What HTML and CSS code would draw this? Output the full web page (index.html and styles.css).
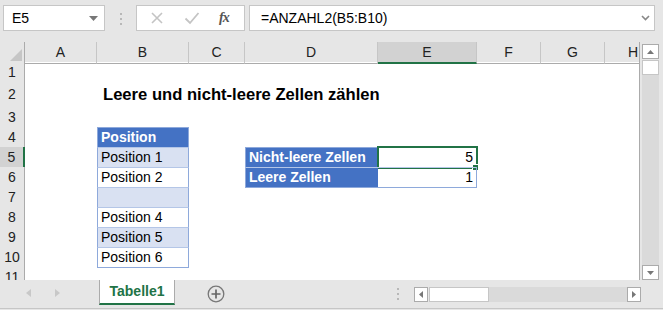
FILE: index.html
```html
<!DOCTYPE html>
<html lang="de">
<head>
    <meta charset="UTF-8">
    <title>Tabelle1</title>
    <link rel="stylesheet" href="styles.css">
</head>
<body>
    <div class="toolbar">
        <div class="namebox">
            <span>E5</span>
            <svg width="9" height="5" viewBox="0 0 9 5"><path d="M0 0h9L4.5 5z" fill="#777"/></svg>
        </div>
        <div class="grip"><i></i><i></i><i></i></div>
        <div class="fbtns">
            <svg width="14" height="14" viewBox="0 0 14 14"><path d="M2 2l10 10M12 2L2 12" stroke="#c4c4c4" stroke-width="1.6"/></svg>
            <svg width="16" height="14" viewBox="0 0 16 14"><path d="M1.5 7.5l4.5 4.5L14.5 2" stroke="#c4c4c4" stroke-width="1.8" fill="none"/></svg>
            <span class="fx">fx</span>
        </div>
        <div class="formula">
            <span>=ANZAHL2(B5:B10)</span>
            <svg width="9" height="6" viewBox="0 0 9 6"><path d="M1 1l3.5 3.5L8 1" stroke="#888" stroke-width="1.6" fill="none"/></svg>
        </div>
    </div>

    <div class="main">
        <div class="sheet">
            <div class="row head">
                <div class="corner"><svg width="12" height="12" viewBox="0 0 12 12"><path d="M12 0v12H0z" fill="#c6c6c6"/></svg></div>
                <div class="ch">A</div><div class="ch">B</div><div class="ch">C</div><div class="ch">D</div>
                <div class="ch sel">E</div><div class="ch">F</div><div class="ch">G</div><div class="ch last">H</div>
            </div>
            <div class="row">
                <div class="rh">1</div>
            </div>
            <div class="row tall">
                <div class="rh">2</div><div></div>
                <div class="title">Leere und nicht-leere Zellen zählen</div>
            </div>
            <div class="row">
                <div class="rh">3</div>
            </div>
            <div class="row">
                <div class="rh">4</div><div></div>
                <div class="cell t-head">Position</div>
            </div>
            <div class="row">
                <div class="rh sel">5</div><div></div>
                <div class="cell t-band">Position 1</div><div></div>
                <div class="cell k-label k-top">Nicht-leere Zellen</div>
                <div class="cell k-val k-top active">5<span class="handle"></span></div>
            </div>
            <div class="row">
                <div class="rh">6</div><div></div>
                <div class="cell t-row">Position 2</div><div></div>
                <div class="cell k-label k-bottom">Leere Zellen</div>
                <div class="cell k-val k-bottom">1</div>
            </div>
            <div class="row">
                <div class="rh">7</div><div></div>
                <div class="cell t-band"></div>
            </div>
            <div class="row">
                <div class="rh">8</div><div></div>
                <div class="cell t-row">Position 4</div>
            </div>
            <div class="row">
                <div class="rh">9</div><div></div>
                <div class="cell t-band">Position 5</div>
            </div>
            <div class="row">
                <div class="rh">10</div><div></div>
                <div class="cell t-row t-end">Position 6</div>
            </div>
            <div class="row cut">
                <div class="rh">11</div>
            </div>
        </div>
        <div class="vscroll">
            <div class="sbtn"><svg width="7" height="4" viewBox="0 0 7 4"><path d="M0 4h7L3.5 0z" fill="#777"/></svg></div>
            <div class="vthumb"></div>
            <div class="vtrack"></div>
            <div class="sbtn"><svg width="7" height="4" viewBox="0 0 7 4"><path d="M0 0h7L3.5 4z" fill="#777"/></svg></div>
        </div>
    </div>

    <div class="tabbar">
        <div class="nav">
            <svg width="5" height="8" viewBox="0 0 5 8"><path d="M5 0v8L0 4z" fill="#c8c8c8"/></svg>
            <svg width="5" height="8" viewBox="0 0 5 8"><path d="M0 0v8L5 4z" fill="#c8c8c8"/></svg>
        </div>
        <div class="tab">Tabelle1</div>
        <div class="addsheet">
            <svg width="18" height="18" viewBox="0 0 18 18"><circle cx="9" cy="9" r="7.8" fill="none" stroke="#777" stroke-width="1.3"/><path d="M9 4.5v9M4.5 9h9" stroke="#666" stroke-width="1.7"/></svg>
        </div>
        <div class="grip small"><i></i><i></i><i></i></div>
        <div class="hscroll">
            <div class="sbtn"><svg width="4" height="7" viewBox="0 0 4 7"><path d="M4 0v7L0 3.5z" fill="#777"/></svg></div>
            <div class="hthumb"></div>
            <div class="htrack"></div>
            <div class="sbtn"><svg width="4" height="7" viewBox="0 0 4 7"><path d="M0 0v7L4 3.5z" fill="#777"/></svg></div>
        </div>
    </div>
</body>
</html>
```

FILE: styles.css
```css
body {
    margin: 0;
    width: 663px;
    height: 310px;
    overflow: hidden;
    background-color: #e6e6e6;
    font-family: 'Liberation Sans', Arial, sans-serif;
    font-size: 14px;
    color: #000000;
}

/* Formelleiste */
.toolbar {
    height: 42px;
    box-sizing: border-box;
    padding: 5px 0 0 3px;
    display: flex;
    align-items: flex-start;
}
.namebox {
    width: 102px;
    height: 26px;
    box-sizing: border-box;
    background-color: #ffffff;
    border: 1px solid #c6c6c6;
    display: flex;
    align-items: center;
    justify-content: space-between;
    padding: 0 6px 0 8px;
}
.grip {
    width: 31px;
    display: flex;
    flex-direction: column;
    align-items: center;
    gap: 3px;
    padding-top: 8px;
}
.grip i {
    width: 2px;
    height: 2px;
    background-color: #b8b8b8;
}
.fbtns {
    width: 109px;
    height: 26px;
    box-sizing: border-box;
    background-color: #ffffff;
    border: 1px solid #c6c6c6;
    display: flex;
    align-items: center;
    padding: 0 0 0 13px;
}
.fbtns svg:first-child {
    margin-right: 20px;
}
.fx {
    margin-left: 19px;
    font-family: 'Liberation Serif', serif;
    font-style: italic;
    font-weight: bold;
    font-size: 14px;
    color: #555555;
    letter-spacing: -1px;
}
.formula {
    margin-left: 4px;
    width: 406px;
    height: 26px;
    box-sizing: border-box;
    background-color: #ffffff;
    border: 1px solid #c6c6c6;
    display: flex;
    align-items: center;
    justify-content: space-between;
    padding: 0 4px 0 11px;
}

/* Tabellenblatt */
.main {
    display: flex;
    height: 238px;
}
.sheet {
    width: 641px;
    background-color: #ffffff;
    border-right: 1px solid #ababab;
    overflow: hidden;
}
.row {
    display: grid;
    grid-template-columns: 25px 72px 92px 56px 133px 99px 64px 64px 36px;
    height: 20px;
    line-height: 20px;
}
.row.tall {
    height: 25px;
    line-height: 25px;
}
.row.cut {
    height: 13px;
}
.row.head {
    background-color: #e6e6e6;
    color: #222222;
}
.corner {
    box-sizing: border-box;
    border-right: 1px solid #ababab;
    border-bottom: 1px solid #ababab;
    display: flex;
    align-items: flex-end;
    justify-content: flex-end;
    padding: 0 2px 2px 0;
}
.ch {
    box-sizing: border-box;
    text-align: center;
    border-right: 1px solid #c6c6c6;
    border-bottom: 1px solid #ababab;
}
.ch.last {
    border-right: none;
    text-align: right;
    padding-right: 3px;
}
.ch.sel {
    background-color: #d2d2d2;
    border-bottom: 2px solid #217346;
}
.rh {
    box-sizing: border-box;
    background-color: #e6e6e6;
    color: #222222;
    text-align: center;
    border-right: 1px solid #ababab;
    border-bottom: 1px solid #c6c6c6;
}
.rh.sel {
    background-color: #d2d2d2;
    border-right: 2px solid #217346;
}
.title {
    grid-column: 3 / 6;
    padding-left: 6px;
    font-weight: bold;
    font-size: 16.6px;
    white-space: nowrap;
}
.cell {
    box-sizing: border-box;
    padding: 0 3px;
    white-space: nowrap;
    position: relative;
}

/* Tabelle B4:B10 */
.t-head, .t-band, .t-row {
    border-left: 1px solid #8ea9db;
    border-right: 1px solid #8ea9db;
    line-height: 19px;
}
.t-head {
    background-color: #4472c4;
    color: #ffffff;
    font-weight: bold;
    border-top: 1px solid #8ea9db;
}
.t-band {
    background-color: #d9e1f2;
    border-top: 1px solid #b4c6e7;
}
.t-row {
    background-color: #ffffff;
    border-top: 1px solid #b4c6e7;
}
.t-end {
    border-bottom: 1px solid #8ea9db;
    line-height: 18px;
}

/* Auswertung D5:E6 */
.k-label {
    background-color: #4472c4;
    color: #ffffff;
    font-weight: bold;
    border-left: 1px solid #8ea9db;
}
.k-val {
    text-align: right;
    border-right: 1px solid #8ea9db;
}
.k-top {
    border-top: 1px solid #8ea9db;
    line-height: 19px;
}
.k-bottom {
    border-top: 1px solid #b4c6e7;
    border-bottom: 1px solid #8ea9db;
    line-height: 18px;
}
.active {
    outline: 2px solid #217346;
    outline-offset: -1px;
}
.handle {
    position: absolute;
    right: -3px;
    bottom: -3px;
    width: 5px;
    height: 5px;
    background-color: #217346;
    border: 1px solid #ffffff;
}

/* Bildlaufleisten */
.vscroll {
    width: 21px;
    padding: 2px 0 0 2px;
    display: flex;
    flex-direction: column;
}
.sbtn {
    width: 17px;
    height: 15px;
    box-sizing: border-box;
    background-color: #ffffff;
    border: 1px solid #ababab;
    display: flex;
    align-items: center;
    justify-content: center;
}
.vthumb {
    width: 17px;
    height: 15px;
    box-sizing: border-box;
    background-color: #ffffff;
    border: 1px solid #c6c6c6;
    margin-top: 1px;
}
.vtrack {
    flex-grow: 1;
    width: 17px;
    background-color: #dadada;
}
.tabbar {
    height: 28px;
    border-bottom: 1px solid #c6c6c6;
    display: flex;
    align-items: flex-start;
}
.nav {
    width: 99px;
    display: flex;
    gap: 24px;
    padding: 9px 0 0 26px;
    box-sizing: border-box;
}
.tab {
    width: 76px;
    height: 25px;
    box-sizing: border-box;
    background-color: #ffffff;
    border-left: 1px solid #ababab;
    border-right: 1px solid #ababab;
    border-bottom: 2px solid #217346;
    color: #217346;
    font-weight: bold;
    text-align: center;
    line-height: 23px;
}
.addsheet {
    margin-left: 32px;
    padding-top: 5px;
}
.grip.small {
    width: 20px;
    margin-left: 163px;
    padding-top: 8px;
    gap: 3px;
}
.hscroll {
    margin-left: 6px;
    margin-top: 7px;
    width: 227px;
    height: 15px;
    display: flex;
}
.hscroll .sbtn {
    width: 14px;
}
.hthumb {
    width: 60px;
    height: 15px;
    box-sizing: border-box;
    background-color: #ffffff;
    border: 1px solid #c6c6c6;
    margin-left: 1px;
}
.htrack {
    flex-grow: 1;
    background-color: #dadada;
}
```
